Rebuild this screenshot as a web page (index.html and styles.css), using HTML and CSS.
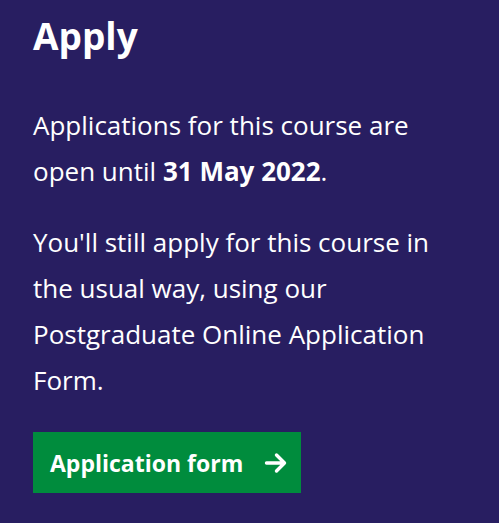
FILE: index.html
```html
<!DOCTYPE html>
<html lang="en">
<head>
<meta charset="utf-8">
<link rel="stylesheet" href="styles.css">
</head>
<body>
<section class="apply">
  <h2 class="apply-title">Apply</h2>
  <p class="apply-text">Applications for this course are open until <strong>31 May 2022</strong>.</p>
  <p class="apply-text">You'll still apply for this course in the usual way, using our Postgraduate Online Application Form.</p>
  <a class="apply-button" href="#">Application form
    <svg class="apply-arrow" viewBox="0 0 24 24" width="24" height="24" aria-hidden="true"><path d="M2.5 12h18M12.5 4 20.5 12l-8 8" fill="none" stroke="#fff" stroke-width="3.4" stroke-linecap="round" stroke-linejoin="round"/></svg>
  </a>
</section>
</body>
</html>
```

FILE: styles.css
```css
html, body {
  margin: 0;
  padding: 0;
  background: #281e61;
}
body {
  font-family: "Open Sans", "DejaVu Sans", sans-serif;
  color: #ffffff;
}
.apply {
  padding: 14px 33px 30px 33px;
}
.apply-title {
  margin: 0 0 44px 0;
  font-size: 37px;
  font-weight: 700;
  line-height: 44px;
}
.apply-text {
  margin: 0 0 25px 0;
  font-size: 26px;
  line-height: 46px;
  width: 420px;
}
.apply-text strong {
  font-weight: 700;
}
.apply-button {
  display: inline-flex;
  align-items: center;
  gap: 21px;
  margin-top: 4px;
  padding: 0 13px 0 17px;
  height: 61px;
  background: #008c3d;
  color: #fff;
  text-decoration: none;
  font-size: 23px;
  font-weight: 700;
}
.apply-arrow {
  display: block;
}
```
